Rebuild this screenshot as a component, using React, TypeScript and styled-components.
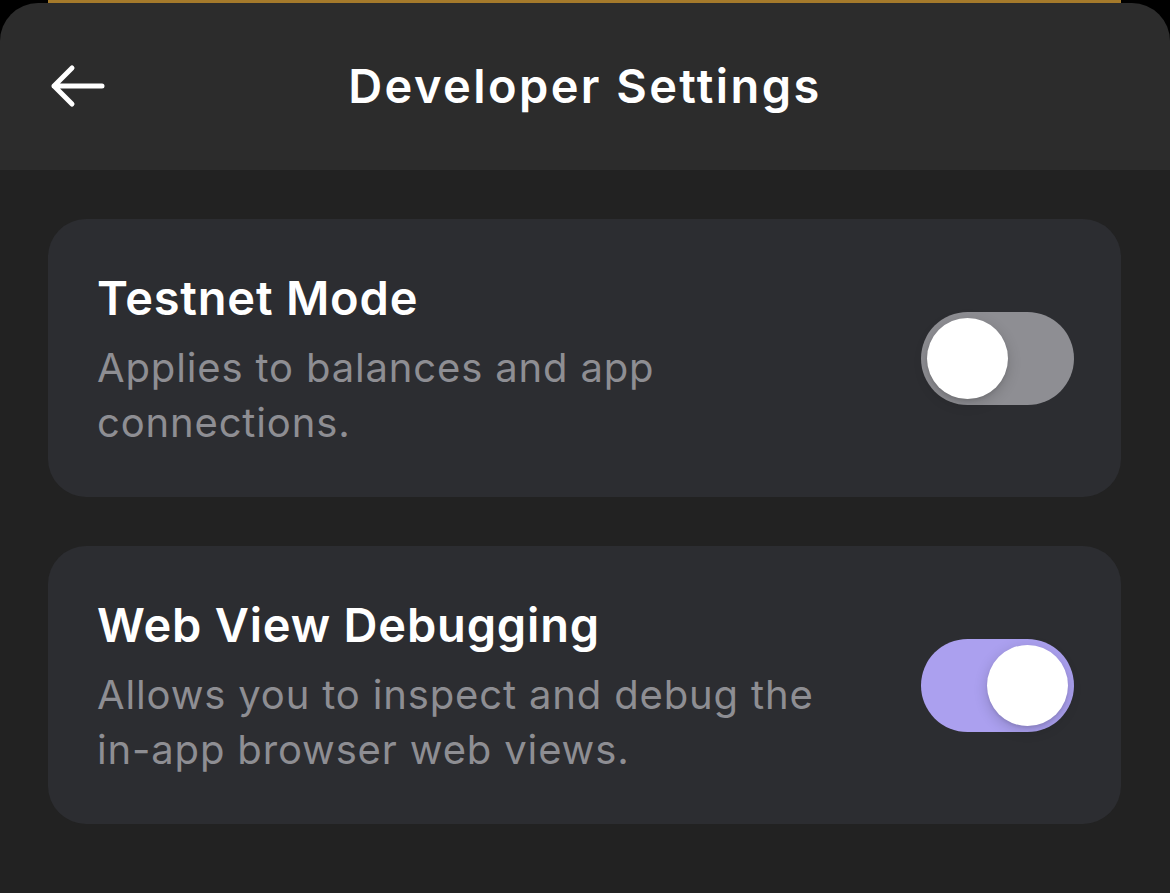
import React, { useState } from "react";
import styled, { createGlobalStyle } from "styled-components";

const GlobalStyle = createGlobalStyle`
  html, body {
    margin: 0;
    padding: 0;
    background: #222222;
    font-family: "Inter", "Noto Sans", "Liberation Sans", sans-serif;
    -webkit-font-smoothing: antialiased;
  }
  #root {
    min-height: 100vh;
  }
`;

const Screen = styled.div`
  width: 1170px;
  min-height: 893px;
  background: #222222;
  display: flex;
  flex-direction: column;
`;

const TopSheet = styled.div`
  background: #000000;
  display: flex;
  flex-direction: column;
`;

const GoldBar = styled.div`
  height: 3px;
  margin: 0 49px 0 48px;
  background: #a57a2b;
`;

const Header = styled.header`
  height: 167px;
  background: #2c2c2c;
  border-radius: 38px 38px 0 0;
  display: grid;
  grid-template-columns: 140px 1fr 140px;
  align-items: center;
  padding-bottom: 2px;
  box-sizing: border-box;
`;

const BackButton = styled.button`
  background: none;
  border: 0;
  padding: 0 0 0 50px;
  display: flex;
  align-items: center;
  cursor: pointer;
  height: 60px;
`;

const Title = styled.h1`
  margin: 0;
  text-align: center;
  color: #ffffff;
  font-size: 47px;
  font-weight: 600;
  letter-spacing: 2.4px;
`;

const Content = styled.main`
  display: flex;
  flex-direction: column;
  gap: 49px;
  padding: 49px 49px 49px 48px;
`;

const Card = styled.section`
  background: #2c2d31;
  border-radius: 38px;
  min-height: 278px;
  box-sizing: border-box;
  padding: 0 47px 0 49px;
  display: flex;
  align-items: center;
  justify-content: space-between;
`;

const CardText = styled.div`
  display: flex;
  flex-direction: column;
  max-width: 730px;
  padding-top: 3px;
`;

const CardTitle = styled.h2`
  margin: 0;
  color: #ffffff;
  font-size: 47px;
  line-height: 56px;
  font-weight: 600;
  letter-spacing: 0.8px;
`;

const CardDesc = styled.p`
  margin: 14px 0 0 0;
  color: #8e8e93;
  font-size: 40px;
  line-height: 55px;
  font-weight: 400;
  letter-spacing: 0.85px;
`;

const Track = styled.button<{ $on: boolean }>`
  flex: none;
  width: 153px;
  height: 93px;
  border: 0;
  border-radius: 47px;
  background: ${({ $on }) => ($on ? "#aba0ef" : "#8e8e93")};
  display: flex;
  align-items: center;
  justify-content: ${({ $on }) => ($on ? "flex-end" : "flex-start")};
  padding: 0 6px;
  box-sizing: border-box;
  cursor: pointer;
`;

const Knob = styled.span`
  width: 81px;
  height: 81px;
  border-radius: 50%;
  background: #ffffff;
  box-shadow: 0 4px 14px rgba(0, 0, 0, 0.18), 0 2px 3px rgba(0, 0, 0, 0.08);
`;

function BackArrow() {
  return (
    <svg width="56" height="44" viewBox="0 0 56 44" fill="none">
      <path
        d="M52 22 H4 M22 4 L4 22 L22 40"
        stroke="#ffffff"
        strokeWidth="5"
        strokeLinecap="round"
        strokeLinejoin="round"
      />
    </svg>
  );
}

interface SettingProps {
  title: string;
  description: string;
  on: boolean;
  onToggle: () => void;
}

function SettingCard({ title, description, on, onToggle }: SettingProps) {
  return (
    <Card>
      <CardText>
        <CardTitle>{title}</CardTitle>
        <CardDesc>{description}</CardDesc>
      </CardText>
      <Track $on={on} onClick={onToggle} aria-pressed={on}>
        <Knob />
      </Track>
    </Card>
  );
}

export default function App() {
  const [testnet, setTestnet] = useState(false);
  const [debugging, setDebugging] = useState(true);

  return (
    <Screen>
      <GlobalStyle />
      <TopSheet>
        <GoldBar />
        <Header>
          <BackButton aria-label="Back">
            <BackArrow />
          </BackButton>
          <Title>Developer Settings</Title>
          <div />
        </Header>
      </TopSheet>
      <Content>
        <SettingCard
          title="Testnet Mode"
          description="Applies to balances and app connections."
          on={testnet}
          onToggle={() => setTestnet(!testnet)}
        />
        <SettingCard
          title="Web View Debugging"
          description="Allows you to inspect and debug the in-app browser web views."
          on={debugging}
          onToggle={() => setDebugging(!debugging)}
        />
      </Content>
    </Screen>
  );
}
